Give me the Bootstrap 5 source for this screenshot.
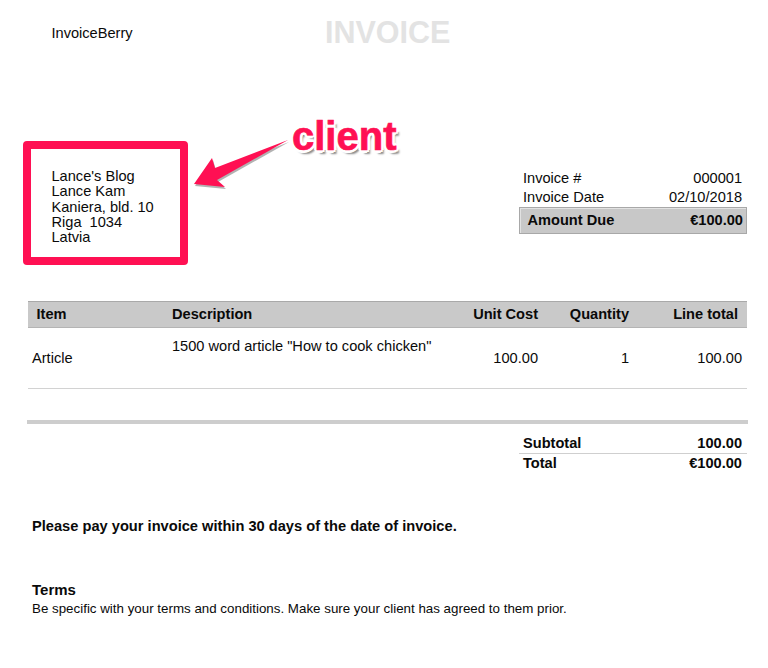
<!DOCTYPE html>
<html lang="en">
<head>
<meta charset="utf-8">
<title>Invoice</title>
<link href="https://cdn.jsdelivr.net/npm/bootstrap@5.3.0/dist/css/bootstrap.min.css" rel="stylesheet">
<style>
html,body{background:#fff;}
body{font-family:"Liberation Sans",Arial,sans-serif;font-size:14.6px;line-height:15.3px;color:#0a0a0a;width:768px;height:668px;overflow:hidden;position:relative;}
.sheet{padding:0 21px 0 28px;}
.top-band{height:169px;position:relative;}
.brand{position:absolute;left:23.5px;top:26px;}
.doc-title{position:absolute;left:297px;top:15px;font-size:30.5px;line-height:34px;font-weight:700;color:#e3e3e3;}
.head-band{height:132px;}
.client-text{padding:0 0 0 23.5px;}
.meta-box{width:228px;}
.meta-row{padding:0 5px 0 4px;height:19px;line-height:19px;}
.due-row{background:#c8c8c8;border:1px solid #a8a8a8;box-shadow:inset 1px 1px 0 #e2e2e2;height:27px;line-height:25px;font-weight:700;padding:0 3px 0 7.5px;}
.head-row{background:#c9c9c9;border-top:1px solid #a9a9a9;border-bottom:1px solid #b4b4b4;height:27px;line-height:25px;font-weight:700;}
.cell-item{width:144px;padding-left:8.5px;}
.cell-desc{width:290px;}
.cell-cost{width:76px;text-align:right;}
.cell-qty{width:91px;text-align:right;}
.cell-total{width:118px;text-align:right;padding-right:9px;}
.line-row{height:61px;border-bottom:1px solid #d2d2d2;}
.line-row .cell-item{padding-left:4px;padding-top:23px;}
.line-row .cell-desc{padding-top:11px;}
.line-row .cell-cost,.line-row .cell-qty,.line-row .cell-total{padding-top:23px;}
.line-row .cell-total{padding-right:5px;}
.thick-rule{height:4px;background:#cdcdcd;margin:31px -1px 0 -1px;}
.sum-box{width:228px;margin:9px 0 0 auto;font-weight:700;}
.sum-row{padding:0 5px 0 4px;height:20px;line-height:20px;}
.sum-row+.sum-row{border-top:1px solid #cfcfcf;line-height:19px;}
.pay-note{font-weight:700;margin:46px 0 0 4px;font-size:14.65px;}
.terms{margin:48px 0 0 4px;}
.terms-title{font-weight:700;font-size:15px;}
.terms-text{font-size:13.35px;line-height:16px;margin-top:3px;}
.client-frame{position:absolute;left:23px;top:141px;width:165px;height:124px;border:8px solid #ff1053;border-radius:4px;}
.client-label{position:absolute;left:292px;top:114px;font-size:40px;line-height:44px;font-weight:700;color:#ff1053;-webkit-text-stroke:.7px #ff1053;text-shadow:-3px 0 0 #fff,3px 0 0 #fff,0 -3px 0 #fff,0 3px 0 #fff,-2px -2px 0 #fff,2px -2px 0 #fff,-2px 2px 0 #fff,2px 2px 0 #fff,3px 4px 2px #888;}
.client-arrow{position:absolute;left:190px;top:135px;width:105px;height:60px;}
</style>
</head>
<body>
<div class="sheet">
  <div class="top-band">
    <div class="brand">InvoiceBerry</div>
    <div class="doc-title">INVOICE</div>
  </div>
  <div class="head-band d-flex justify-content-between align-items-start">
    <div class="client-text">Lance's Blog<br>Lance Kam<br>Kaniera, bld. 10<br>Riga&nbsp; 1034<br>Latvia</div>
    <div class="meta-box">
      <div class="meta-row d-flex justify-content-between"><span>Invoice #</span><span>000001</span></div>
      <div class="meta-row d-flex justify-content-between"><span>Invoice Date</span><span>02/10/2018</span></div>
      <div class="due-row d-flex justify-content-between"><span>Amount Due</span><span>€100.00</span></div>
    </div>
  </div>
  <div class="head-row d-flex">
    <div class="cell-item">Item</div><div class="cell-desc">Description</div><div class="cell-cost">Unit Cost</div><div class="cell-qty">Quantity</div><div class="cell-total">Line total</div>
  </div>
  <div class="line-row d-flex">
    <div class="cell-item">Article</div><div class="cell-desc">1500 word article "How to cook chicken"</div><div class="cell-cost">100.00</div><div class="cell-qty">1</div><div class="cell-total">100.00</div>
  </div>
  <div class="thick-rule"></div>
  <div class="sum-box">
    <div class="sum-row d-flex justify-content-between"><span>Subtotal</span><span>100.00</span></div>
    <div class="sum-row d-flex justify-content-between"><span>Total</span><span>€100.00</span></div>
  </div>
  <div class="pay-note">Please pay your invoice within 30 days of the date of invoice.</div>
  <div class="terms">
    <div class="terms-title">Terms</div>
    <div class="terms-text">Be specific with your terms and conditions. Make sure your client has agreed to them prior.</div>
  </div>
</div>
<div class="client-frame"></div>
<svg class="client-arrow" viewBox="0 0 105 60" aria-hidden="true"><polygon points="98,5 25,33 22,23 4,49 35,52 27,45" fill="#666" transform="translate(1,2)" opacity=".5"/><polygon points="98,5 25,33 22,23 4,49 35,52 27,45" fill="#ff1053"/></svg>
<div class="client-label">client</div>
<script src="https://cdn.jsdelivr.net/npm/bootstrap@5.3.0/dist/js/bootstrap.bundle.min.js"></script>
</body>
</html>
